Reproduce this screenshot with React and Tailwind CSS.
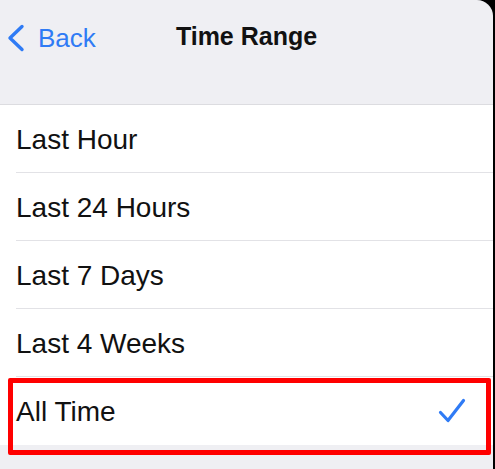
const RANGES = ['Last Hour', 'Last 24 Hours', 'Last 7 Days', 'Last 4 Weeks', 'All Time']

function CheckMark() {
  return (
    <svg width="28" height="26" viewBox="0 0 28 26" fill="none">
      <path d="M2.5 14.5 L10 22.5 L25.5 2.5" stroke="#2f7bf5" strokeWidth="3.2" strokeLinecap="round" strokeLinejoin="round" />
    </svg>
  )
}

function BackChevron() {
  return (
    <svg width="20" height="28" viewBox="0 0 20 28" fill="none">
      <path d="M16 2.5 L4 14 L16 25.5" stroke="#2f7bf5" strokeWidth="3.4" strokeLinecap="round" strokeLinejoin="round" />
    </svg>
  )
}

export default function App() {
  const selected = 'All Time'

  return (
    <div className="w-[495px] h-[469px] bg-black overflow-hidden" style={{ fontFamily: '"Liberation Sans", Arial, sans-serif' }}>
      <div className="relative w-[493px] h-full bg-[#efeff3] rounded-tr-[16px] flex flex-col">
        {/* Nav bar */}
        <div className="relative h-[105px] border-b border-[#dcdce0]">
          <div className="absolute left-[6px] top-[23px] flex items-center text-[#2f7bf5]">
            <BackChevron />
            <span className="text-[26px] leading-[30px] ml-[12px]">Back</span>
          </div>
          <div className="pt-[21px] text-center text-[25px] leading-[30px] font-bold text-[#111]">Time Range</div>
        </div>

        {/* Options */}
        <div className="bg-white">
          {RANGES.map((r, i) => (
            <div key={r} className="pl-[16px]">
              <div className={'h-[68px] flex items-center justify-between pr-[27px] ' + (i < RANGES.length - 1 ? 'border-b border-[#e2e2e6]' : '')}>
                <span className="text-[28px] text-[#111] pt-[2px]">{r}</span>
                {r === selected && <CheckMark />}
              </div>
            </div>
          ))}
        </div>

        {/* highlight annotation */}
        <div className="absolute left-[8px] top-[378px] w-[483px] h-[77px] border-[5px] border-[#ff0000] rounded-[2px]" />
      </div>
    </div>
  )
}
